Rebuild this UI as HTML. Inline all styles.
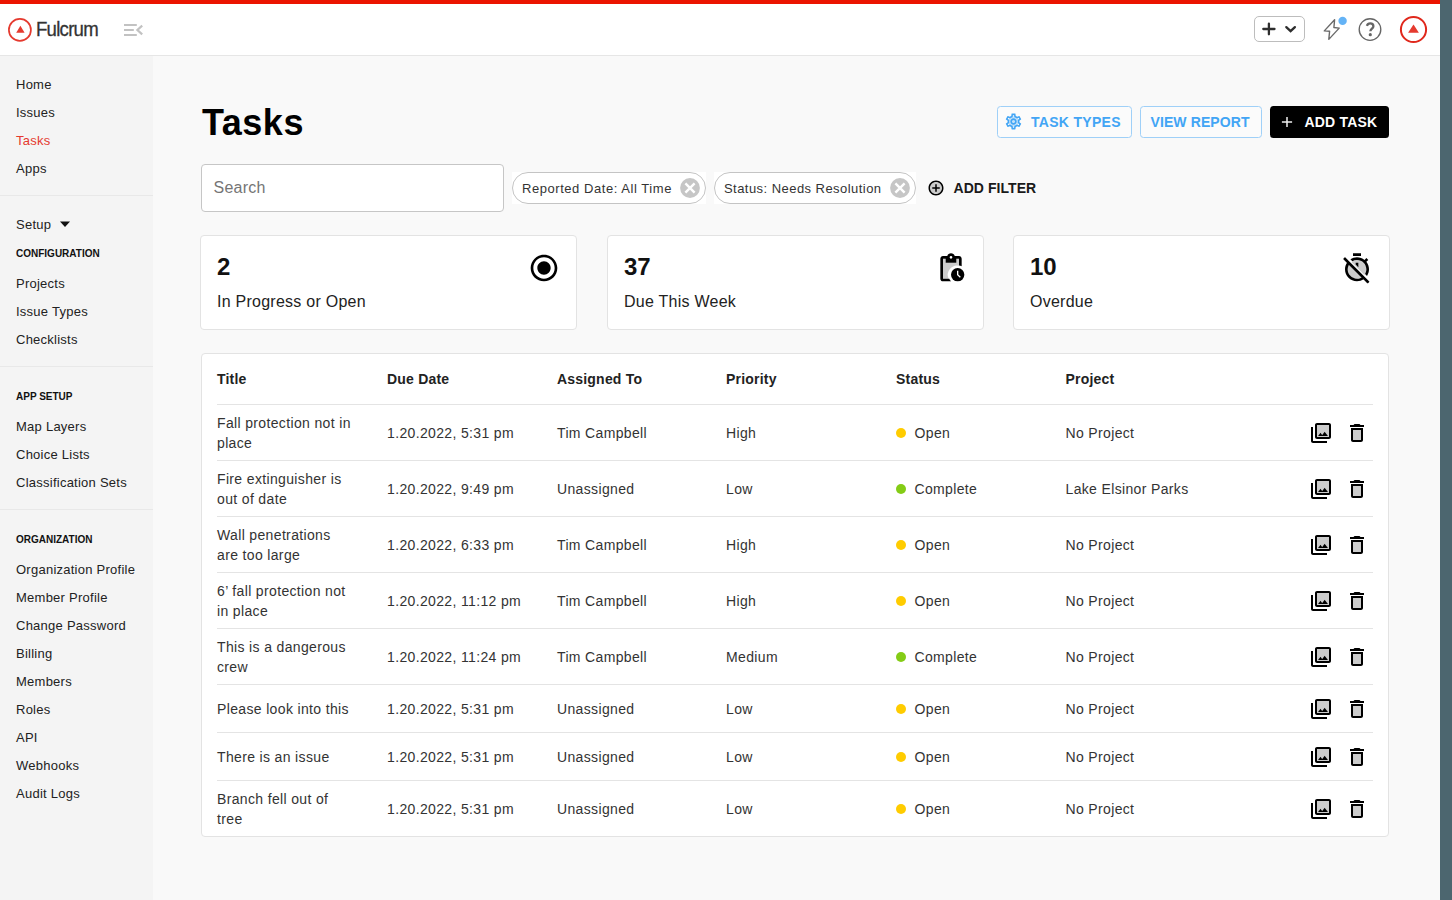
<!DOCTYPE html>
<html><head><meta charset="utf-8">
<style>
*{box-sizing:border-box;margin:0;padding:0}
html,body{width:1452px;height:900px;overflow:hidden;background:#f9f9f9;font-family:"Liberation Sans",sans-serif;color:#333}
.abs{position:absolute}
.t{position:absolute;white-space:nowrap}
#topbar{position:absolute;left:0;top:0;width:1440px;height:4px;background:#eb1400}
#rail{position:absolute;left:1440px;top:0;width:12px;height:900px;background:#4c666f}
#header{position:absolute;left:0;top:4px;width:1440px;height:52px;background:#fff;border-bottom:1px solid #e6e6e6}
#sidebar{position:absolute;left:0;top:56px;width:153px;height:844px;background:#f4f4f4}
.nav{position:absolute;left:16px;font-size:13px;color:#222;white-space:nowrap;letter-spacing:0.25px;line-height:16px}
.sec{position:absolute;left:16px;font-size:10px;font-weight:700;color:#111;white-space:nowrap;line-height:12px}
.sep{position:absolute;left:0;width:153px;height:1px;background:#e8e8e8}
.btn{position:absolute;top:106px;height:32px;border-radius:3.5px;font-size:14px;font-weight:700;letter-spacing:0.3px;line-height:30px;white-space:nowrap}
.obtn{border:1px solid #9fd0f8;color:#42a5f5;background:#fbfbfb}
.chip{position:absolute;top:172px;height:32px;border:1px solid #c4c4c4;border-radius:16px;background:#fff;font-size:13px;letter-spacing:0.45px;color:#333;line-height:30px;white-space:nowrap}
.card{position:absolute;top:235px;width:377px;height:95px;background:#fff;border:1px solid #e3e3e3;border-radius:4px}
.num{position:absolute;left:16px;top:17px;font-size:24px;font-weight:700;color:#111;line-height:28px}
.lbl{position:absolute;left:16px;top:56.3px;font-size:16px;color:#222;line-height:20px;letter-spacing:0.25px}
#table{position:absolute;left:201px;top:353px;width:1188px;height:484px;background:#fff;border:1px solid #e3e3e3;border-radius:4px}
.th{position:absolute;font-size:14px;font-weight:700;color:#222;line-height:20px;white-space:nowrap;letter-spacing:0.2px}
.td{position:absolute;font-size:14px;color:#333;line-height:20px;white-space:nowrap;letter-spacing:0.35px}
.hr{position:absolute;left:217px;width:1156px;height:1px;background:#e4e4e4}
.dot{position:absolute;width:10px;height:10px;border-radius:5px}
</style></head>
<body>
<div id="topbar"></div>
<div id="rail"></div>
<div id="header">
  <svg class="abs" style="left:7px;top:13px" width="26" height="26" viewBox="0 0 26 26">
    <circle cx="12.9" cy="12.9" r="11" fill="none" stroke="#e53a2f" stroke-width="1.7"/>
    <path d="M13.4 8.8 L17.6 15.8 L9.2 15.8 Z" fill="#e53a2f"/>
  </svg>
  <div class="abs" style="left:36px;top:14px;font-size:20px;color:#333;line-height:22px;letter-spacing:-0.8px;-webkit-text-stroke:0.3px #333;transform:scaleX(0.93);transform-origin:0 0">Fulcrum</div>
  <svg class="abs" style="left:120px;top:16px" width="26" height="26" viewBox="0 0 26 26">
    <g stroke="#c2c2c2" stroke-width="2" fill="none">
      <path d="M4 5h12.8M4 10h9.8M4 15h12.8"/>
      <path d="M22.2 5.6L17.4 10L22.2 14.4" stroke-width="2.2"/>
    </g>
  </svg>
</div>
<div class="abs" style="left:1254px;top:16px;width:51px;height:26px;border:1px solid #bdbdbd;border-radius:5px;background:#fff"></div>
<svg class="abs" style="left:1254px;top:16px" width="51" height="26" viewBox="0 0 51 26">
  <path d="M14.9 7.7v10.6M9.3 13h11.2" stroke="#2e2e2e" stroke-width="2.3" fill="none" stroke-linecap="round"/>
  <path d="M32.3 11.1l4.3 4.1l4.3-4.1" stroke="#2e2e2e" stroke-width="2.3" fill="none" stroke-linecap="round"/>
</svg>
<svg class="abs" style="left:1320px;top:14px" width="30" height="30" viewBox="0 0 30 30">
  <path d="M14.6 5.7 L4.3 16.9 L9.6 17.2 L8.8 25.4 L19.2 14.1 L13.9 13.5 Z" stroke="#6a6a6a" stroke-width="1.4" fill="none" stroke-linejoin="round"/>
  <circle cx="22.6" cy="6.9" r="4.2" fill="#64b3f6"/>
</svg>
<svg class="abs" style="left:1356px;top:16px" width="28" height="28" viewBox="0 0 28 28">
  <circle cx="14" cy="13.5" r="10.8" fill="none" stroke="#666" stroke-width="1.35"/>
  <path d="M10.9 9.9c0.6-1.8 1.8-2.5 3.3-2.5c1.9 0 3.2 1.1 3.2 2.8c0 2.3-3 2.6-3 5.1" stroke="#666" stroke-width="2.3" fill="none"/>
  <circle cx="14.3" cy="18.7" r="1.6" fill="#666"/>
</svg>
<svg class="abs" style="left:1398px;top:14px" width="31" height="31" viewBox="0 0 31 31">
  <circle cx="15.5" cy="15.5" r="12.6" fill="none" stroke="#e0281c" stroke-width="2"/>
  <path d="M15.5 10.4 L20.9 18.8 L10.1 18.8 Z" fill="#e53a2f"/>
</svg>
<div id="sidebar"></div>
<div class="nav" style="top:76.5px">Home</div>
<div class="nav" style="top:104.5px">Issues</div>
<div class="nav" style="top:132.5px;color:#e53a2f">Tasks</div>
<div class="nav" style="top:160.5px">Apps</div>
<div class="sep" style="top:195px"></div>
<div class="nav" style="top:216.5px">Setup</div>
<svg class="abs" style="left:59px;top:221px" width="12" height="7" viewBox="0 0 12 7"><path d="M1 0.5h10L6 6z" fill="#111"/></svg>
<div class="sec" style="top:247.5px">CONFIGURATION</div>
<div class="nav" style="top:275.5px">Projects</div>
<div class="nav" style="top:303.5px">Issue Types</div>
<div class="nav" style="top:331.5px">Checklists</div>
<div class="sep" style="top:366px"></div>
<div class="sec" style="top:390.5px">APP SETUP</div>
<div class="nav" style="top:418.5px">Map Layers</div>
<div class="nav" style="top:446.5px">Choice Lists</div>
<div class="nav" style="top:474.5px">Classification Sets</div>
<div class="sep" style="top:509px"></div>
<div class="sec" style="top:533.5px">ORGANIZATION</div>
<div class="nav" style="top:561.5px">Organization Profile</div>
<div class="nav" style="top:589.5px">Member Profile</div>
<div class="nav" style="top:617.5px">Change Password</div>
<div class="nav" style="top:645.5px">Billing</div>
<div class="nav" style="top:673.5px">Members</div>
<div class="nav" style="top:701.5px">Roles</div>
<div class="nav" style="top:729.5px">API</div>
<div class="nav" style="top:757.5px">Webhooks</div>
<div class="nav" style="top:785.5px">Audit Logs</div>
<div class="t" style="left:202px;top:102.5px;font-size:36px;font-weight:700;color:#000;line-height:40px;letter-spacing:0.5px">Tasks</div>
<div class="btn obtn" style="left:997px;width:135px"></div>
<svg class="abs" style="left:1004.4px;top:112.2px" width="19" height="19" viewBox="0 0 24 24" fill="#42a5f5"><circle cx="12" cy="12" r="6.6" opacity=".3"/><path d="M19.43 12.98c.04-.32.07-.64.07-.98 0-.34-.03-.66-.07-.98l2.11-1.65c.19-.15.24-.42.12-.64l-2-3.46c-.09-.16-.26-.25-.44-.25-.06 0-.12.01-.17.03l-2.49 1c-.52-.4-1.08-.73-1.69-.98l-.38-2.65C14.46 2.18 14.25 2 14 2h-4c-.25 0-.46.18-.49.42l-.38 2.650c-.61.25-1.17.59-1.69.98l-2.49-1c-.06-.02-.12-.03-.18-.03-.17 0-.34.09-.43.25l-2 3.46c-.13.22-.07.49.12.64l2.11 1.65c-.04.32-.07.65-.07.98s.03.66.07.98l-2.11 1.65c-.19.15-.24.42-.12.64l2 3.46c.09.16.26.25.44.25.06 0 .12-.01.17-.03l2.49-1c.52.4 1.08.73 1.69.98l.38 2.65c.03.24.24.42.49.42h4c.25 0 .46-.18.49-.42l.38-2.65c.61-.25 1.17-.59 1.690-.98l2.49 1c.06.02.12.03.18.03.17 0 .34-.09.43-.25l2-3.46c.12-.22.07-.49-.12-.64l-2.11-1.65zm-1.98-1.71c.04.31.05.52.05.73 0 .21-.02.43-.05.73l-.14 1.13.89.7 1.08.84-.7 1.21-1.27-.51-1.04-.42-.9.68c-.43.32-.84.56-1.25.73l-1.06.43-.16 1.13-.2 1.35h-1.4l-.19-1.35-.16-1.13-1.06-.43c-.43-.18-.83-.41-1.23-.71l-.91-.7-1.06.43-1.27.51-.7-1.21 1.08-.84.89-.7-.14-1.13c-.03-.31-.05-.54-.05-.74s.02-.43.05-.73l.14-1.13-.89-.7-1.08-.84.7-1.21 1.27.51 1.04.42.9-.68c.43-.32.84-.56 1.25-.73l1.06-.43.16-1.13.2-1.35h1.39l.19 1.35.16 1.13 1.06.43c.43.18.83.41 1.23.71l.91.7 1.06-.43 1.27-.51.7 1.21-1.070.85-.89.7.14 1.13zM12 8c-2.21 0-4 1.79-4 4s1.79 4 4 4 4-1.79 4-4-1.79-4-4-4zm0 6c-1.1 0-2-.9-2-2s.9-2 2-2 2 .9 2 2-.9 2-2 2z"/></svg>
<div class="t" style="left:1031px;top:112px;font-size:14px;font-weight:700;letter-spacing:0.3px;line-height:20px;color:#42a5f5">TASK TYPES</div>
<div class="btn obtn" style="left:1140px;width:122px"></div>
<div class="t" style="left:1150.5px;top:112px;font-size:14px;font-weight:700;letter-spacing:0.1px;line-height:20px;color:#42a5f5">VIEW REPORT</div>
<div class="btn" style="left:1270px;width:119px;background:#000"></div>
<svg class="abs" style="left:1280px;top:114px" width="14" height="16" viewBox="0 0 14 16"><path d="M7 2.9v10.2M1.9 8h10.2" stroke="#eee" stroke-width="1.5"/></svg>
<div class="t" style="left:1304.5px;top:112px;font-size:14px;font-weight:700;letter-spacing:0.2px;line-height:20px;color:#fff">ADD TASK</div>
<div class="abs" style="left:201px;top:164px;width:303px;height:48px;border:1px solid #c6c6c6;border-radius:4px;background:#fff"></div>
<div class="t" style="left:213.5px;top:178px;font-size:16px;color:#757575;line-height:20px;letter-spacing:0.25px">Search</div>
<div class="abs" style="left:512px;top:172px;width:194px;height:32px;background:#fff"></div>
<div class="chip" style="left:512px;width:194px"></div>
<div class="t" style="left:522px;top:179.5px;font-size:13px;letter-spacing:0.55px;color:#333;line-height:18px">Reported Date: All Time</div>
<svg class="abs" style="left:680px;top:178px" width="20" height="20" viewBox="0 0 20 20"><circle cx="10" cy="10" r="9.9" fill="#c6c6c6"/><path d="M5.4 5.4L14.6 14.6M14.6 5.4L5.4 14.6" stroke="#fff" stroke-width="2.4"/></svg>
<div class="abs" style="left:714px;top:172px;width:202px;height:32px;background:#fff"></div>
<div class="chip" style="left:714px;width:202px"></div>
<div class="t" style="left:724px;top:179.5px;font-size:13px;letter-spacing:0.45px;color:#333;line-height:18px">Status: Needs Resolution</div>
<svg class="abs" style="left:890px;top:178px" width="20" height="20" viewBox="0 0 20 20"><circle cx="10" cy="10" r="9.9" fill="#c6c6c6"/><path d="M5.4 5.4L14.6 14.6M14.6 5.4L5.4 14.6" stroke="#fff" stroke-width="2.4"/></svg>
<svg class="abs" style="left:927px;top:179px" width="18" height="18" viewBox="0 0 24 24"><circle cx="12" cy="12" r="9" fill="#ccc"/><path d="M13 7h-2v4H7v2h4v4h2v-4h4v-2h-4V7zm-1-5C6.48 2 2 6.48 2 12s4.48 10 10 10 10-4.48 10-10S17.52 2 12 2zm0 18c-4.41 0-8-3.59-8-8s3.59-8 8-8 8 3.59 8 8-3.59 8-8 8z" fill="#000"/></svg>
<div class="t" style="left:953.5px;top:178px;font-size:14px;font-weight:700;letter-spacing:0.05px;color:#1a1a1a;line-height:20px">ADD FILTER</div>
<div class="card" style="left:200px"><div class="num">2</div><div class="lbl">In Progress or Open</div><svg class="abs" style="left:327px;top:16px" width="32" height="32" viewBox="0 0 24 24" fill="#000"><path d="M12 7c-2.76 0-5 2.24-5 5s2.24 5 5 5 5-2.24 5-5-2.24-5-5-5zm0-5C6.48 2 2 6.48 2 12s4.48 10 10 10 10-4.48 10-10S17.52 2 12 2zm0 18c-4.42 0-8-3.58-8-8s3.58-8 8-8 8 3.58 8 8-3.58 8-8 8z"/></svg></div>
<div class="card" style="left:607px"><div class="num">37</div><div class="lbl">Due This Week</div><svg class="abs" style="left:327px;top:16px" width="32" height="32" viewBox="0 0 24 24" fill="#000"><path d="M6 5h2v3h8V5h2v5.3a7 7 0 0 0-7.8 9.7H6z" fill="#ccc"/><path d="M18 3h-3.18C14.4 1.84 13.3 1 12 1s-2.4.84-2.82 2H6c-1.1 0-2 .9-2 2v15c0 1.1.9 2 2 2h6.11c-.59-.57-1.07-1.25-1.42-2H6V5h2v3h8V5h2v5.08c.71.1 1.38.31 2 .6V5c0-1.1-.9-2-2-2zm-6 2c-.55 0-1-.45-1-1s.45-1 1-1 1 .45 1 1-.45 1-1 1z"/><circle cx="17" cy="17" r="5"/><path d="M16.5 14h1v2.79l1.85 1.85-.7.71-2.15-2.15z" fill="#fff"/></svg></div>
<div class="card" style="left:1013px"><div class="num">10</div><div class="lbl">Overdue</div><svg class="abs" style="left:327px;top:16px" width="32" height="32" viewBox="0 0 24 24" fill="#000"><circle cx="12" cy="13" r="7" fill="#ccc"/><path d="M15 1H9v2h6V1zm4.03 6.39l1.42-1.42c-.43-.51-.9-.99-1.41-1.41l-1.42 1.42C16.07 4.74 14.12 4 12 4c-1.83 0-3.53.55-4.95 1.48l1.46 1.46C9.53 6.35 10.73 6 12 6c3.87 0 7 3.13 7 7 0 1.27-.35 2.47-.94 3.49l1.45 1.45C20.45 16.53 21 14.83 21 13c0-2.12-.74-4.07-1.97-5.61zM11 9.44l2 2V8h-2v1.44zM3.02 4L1.75 5.27 4.5 8.03C3.55 9.45 3 11.16 3 13c0 4.97 4.02 9 9 9 1.84 0 3.55-.55 4.98-1.5l2.5 2.5 1.27-1.27-7.71-7.71L3.02 4zM12 20c-3.87 0-7-3.13-7-7 0-1.28.35-2.48.95-3.52l9.56 9.56c-1.03.61-2.23.96-3.51.96z"/><path d="M3.3 3.6L21.6 21.9" stroke="#fff" stroke-width="0.9"/><path d="M2.4 4.6L20.7 22.9" stroke="#000" stroke-width="1.8"/></svg></div>
<div id="table"></div>
<div class="th" style="left:217px;top:369px">Title</div>
<div class="th" style="left:387px;top:369px">Due Date</div>
<div class="th" style="left:557px;top:369px">Assigned To</div>
<div class="th" style="left:726px;top:369px">Priority</div>
<div class="th" style="left:896px;top:369px">Status</div>
<div class="th" style="left:1065.5px;top:369px">Project</div>
<div class="hr" style="top:404px"></div>
<div class="hr" style="top:460px"></div>
<div class="td" style="left:217px;top:413.0px">Fall protection not in</div>
<div class="td" style="left:217px;top:433.0px">place</div>
<div class="td" style="left:387px;top:423.0px">1.20.2022, 5:31 pm</div>
<div class="td" style="left:557px;top:423.0px">Tim Campbell</div>
<div class="td" style="left:726px;top:423.0px">High</div>
<div class="td" style="left:914.5px;top:423.0px">Open</div>
<div class="td" style="left:1065.5px;top:423.0px">No Project</div>
<div class="dot" style="left:896px;top:428.0px;background:#ffcc00"></div>
<svg class="abs" style="left:1309px;top:421.0px" width="24" height="24" viewBox="0 0 24 24" fill="#000"><path d="M8 16h12V4H8v12zm3.5-4.33l1.69 2.26 2.48-3.09L19 15H9l2.5-3.33z" fill="#ccc"/><path d="M8 2c-1.1 0-2 .9-2 2v12c0 1.1.9 2 2 2h12c1.1 0 2-.9 2-2V4c0-1.1-.9-2-2-2H8zm12 14H8V4h12v12zm-4.33-5.17l-2.48 3.09-1.69-2.25L9 15h10zM4 22h14v-2H4V6H2v14c0 1.1.9 2 2 2z"/></svg>
<svg class="abs" style="left:1345px;top:421.0px" width="24" height="24" viewBox="0 0 24 24" fill="#000"><path d="M8 9h8v10H8z" fill="#ccc"/><path d="M15.5 4l-1-1h-5l-1 1H5v2h14V4zM6 19c0 1.1.9 2 2 2h8c1.1 0 2-.9 2-2V7H6v12zM8 9h8v10H8V9z"/></svg>
<div class="hr" style="top:516px"></div>
<div class="td" style="left:217px;top:469.0px">Fire extinguisher is</div>
<div class="td" style="left:217px;top:489.0px">out of date</div>
<div class="td" style="left:387px;top:479.0px">1.20.2022, 9:49 pm</div>
<div class="td" style="left:557px;top:479.0px">Unassigned</div>
<div class="td" style="left:726px;top:479.0px">Low</div>
<div class="td" style="left:914.5px;top:479.0px">Complete</div>
<div class="td" style="left:1065.5px;top:479.0px">Lake Elsinor Parks</div>
<div class="dot" style="left:896px;top:484.0px;background:#84cc16"></div>
<svg class="abs" style="left:1309px;top:477.0px" width="24" height="24" viewBox="0 0 24 24" fill="#000"><path d="M8 16h12V4H8v12zm3.5-4.33l1.69 2.26 2.48-3.09L19 15H9l2.5-3.33z" fill="#ccc"/><path d="M8 2c-1.1 0-2 .9-2 2v12c0 1.1.9 2 2 2h12c1.1 0 2-.9 2-2V4c0-1.1-.9-2-2-2H8zm12 14H8V4h12v12zm-4.33-5.17l-2.48 3.09-1.69-2.25L9 15h10zM4 22h14v-2H4V6H2v14c0 1.1.9 2 2 2z"/></svg>
<svg class="abs" style="left:1345px;top:477.0px" width="24" height="24" viewBox="0 0 24 24" fill="#000"><path d="M8 9h8v10H8z" fill="#ccc"/><path d="M15.5 4l-1-1h-5l-1 1H5v2h14V4zM6 19c0 1.1.9 2 2 2h8c1.1 0 2-.9 2-2V7H6v12zM8 9h8v10H8V9z"/></svg>
<div class="hr" style="top:572px"></div>
<div class="td" style="left:217px;top:525.0px">Wall penetrations</div>
<div class="td" style="left:217px;top:545.0px">are too large</div>
<div class="td" style="left:387px;top:535.0px">1.20.2022, 6:33 pm</div>
<div class="td" style="left:557px;top:535.0px">Tim Campbell</div>
<div class="td" style="left:726px;top:535.0px">High</div>
<div class="td" style="left:914.5px;top:535.0px">Open</div>
<div class="td" style="left:1065.5px;top:535.0px">No Project</div>
<div class="dot" style="left:896px;top:540.0px;background:#ffcc00"></div>
<svg class="abs" style="left:1309px;top:533.0px" width="24" height="24" viewBox="0 0 24 24" fill="#000"><path d="M8 16h12V4H8v12zm3.5-4.33l1.69 2.26 2.48-3.09L19 15H9l2.5-3.33z" fill="#ccc"/><path d="M8 2c-1.1 0-2 .9-2 2v12c0 1.1.9 2 2 2h12c1.1 0 2-.9 2-2V4c0-1.1-.9-2-2-2H8zm12 14H8V4h12v12zm-4.33-5.17l-2.48 3.09-1.69-2.25L9 15h10zM4 22h14v-2H4V6H2v14c0 1.1.9 2 2 2z"/></svg>
<svg class="abs" style="left:1345px;top:533.0px" width="24" height="24" viewBox="0 0 24 24" fill="#000"><path d="M8 9h8v10H8z" fill="#ccc"/><path d="M15.5 4l-1-1h-5l-1 1H5v2h14V4zM6 19c0 1.1.9 2 2 2h8c1.1 0 2-.9 2-2V7H6v12zM8 9h8v10H8V9z"/></svg>
<div class="hr" style="top:628px"></div>
<div class="td" style="left:217px;top:581.0px">6’ fall protection not</div>
<div class="td" style="left:217px;top:601.0px">in place</div>
<div class="td" style="left:387px;top:591.0px">1.20.2022, 11:12 pm</div>
<div class="td" style="left:557px;top:591.0px">Tim Campbell</div>
<div class="td" style="left:726px;top:591.0px">High</div>
<div class="td" style="left:914.5px;top:591.0px">Open</div>
<div class="td" style="left:1065.5px;top:591.0px">No Project</div>
<div class="dot" style="left:896px;top:596.0px;background:#ffcc00"></div>
<svg class="abs" style="left:1309px;top:589.0px" width="24" height="24" viewBox="0 0 24 24" fill="#000"><path d="M8 16h12V4H8v12zm3.5-4.33l1.69 2.26 2.48-3.09L19 15H9l2.5-3.33z" fill="#ccc"/><path d="M8 2c-1.1 0-2 .9-2 2v12c0 1.1.9 2 2 2h12c1.1 0 2-.9 2-2V4c0-1.1-.9-2-2-2H8zm12 14H8V4h12v12zm-4.33-5.17l-2.48 3.09-1.69-2.25L9 15h10zM4 22h14v-2H4V6H2v14c0 1.1.9 2 2 2z"/></svg>
<svg class="abs" style="left:1345px;top:589.0px" width="24" height="24" viewBox="0 0 24 24" fill="#000"><path d="M8 9h8v10H8z" fill="#ccc"/><path d="M15.5 4l-1-1h-5l-1 1H5v2h14V4zM6 19c0 1.1.9 2 2 2h8c1.1 0 2-.9 2-2V7H6v12zM8 9h8v10H8V9z"/></svg>
<div class="hr" style="top:684px"></div>
<div class="td" style="left:217px;top:637.0px">This is a dangerous</div>
<div class="td" style="left:217px;top:657.0px">crew</div>
<div class="td" style="left:387px;top:647.0px">1.20.2022, 11:24 pm</div>
<div class="td" style="left:557px;top:647.0px">Tim Campbell</div>
<div class="td" style="left:726px;top:647.0px">Medium</div>
<div class="td" style="left:914.5px;top:647.0px">Complete</div>
<div class="td" style="left:1065.5px;top:647.0px">No Project</div>
<div class="dot" style="left:896px;top:652.0px;background:#84cc16"></div>
<svg class="abs" style="left:1309px;top:645.0px" width="24" height="24" viewBox="0 0 24 24" fill="#000"><path d="M8 16h12V4H8v12zm3.5-4.33l1.69 2.26 2.48-3.09L19 15H9l2.5-3.33z" fill="#ccc"/><path d="M8 2c-1.1 0-2 .9-2 2v12c0 1.1.9 2 2 2h12c1.1 0 2-.9 2-2V4c0-1.1-.9-2-2-2H8zm12 14H8V4h12v12zm-4.33-5.17l-2.48 3.09-1.69-2.25L9 15h10zM4 22h14v-2H4V6H2v14c0 1.1.9 2 2 2z"/></svg>
<svg class="abs" style="left:1345px;top:645.0px" width="24" height="24" viewBox="0 0 24 24" fill="#000"><path d="M8 9h8v10H8z" fill="#ccc"/><path d="M15.5 4l-1-1h-5l-1 1H5v2h14V4zM6 19c0 1.1.9 2 2 2h8c1.1 0 2-.9 2-2V7H6v12zM8 9h8v10H8V9z"/></svg>
<div class="hr" style="top:732px"></div>
<div class="td" style="left:217px;top:699.0px">Please look into this</div>
<div class="td" style="left:387px;top:699.0px">1.20.2022, 5:31 pm</div>
<div class="td" style="left:557px;top:699.0px">Unassigned</div>
<div class="td" style="left:726px;top:699.0px">Low</div>
<div class="td" style="left:914.5px;top:699.0px">Open</div>
<div class="td" style="left:1065.5px;top:699.0px">No Project</div>
<div class="dot" style="left:896px;top:704.0px;background:#ffcc00"></div>
<svg class="abs" style="left:1309px;top:697.0px" width="24" height="24" viewBox="0 0 24 24" fill="#000"><path d="M8 16h12V4H8v12zm3.5-4.33l1.69 2.26 2.48-3.09L19 15H9l2.5-3.33z" fill="#ccc"/><path d="M8 2c-1.1 0-2 .9-2 2v12c0 1.1.9 2 2 2h12c1.1 0 2-.9 2-2V4c0-1.1-.9-2-2-2H8zm12 14H8V4h12v12zm-4.33-5.17l-2.48 3.09-1.69-2.25L9 15h10zM4 22h14v-2H4V6H2v14c0 1.1.9 2 2 2z"/></svg>
<svg class="abs" style="left:1345px;top:697.0px" width="24" height="24" viewBox="0 0 24 24" fill="#000"><path d="M8 9h8v10H8z" fill="#ccc"/><path d="M15.5 4l-1-1h-5l-1 1H5v2h14V4zM6 19c0 1.1.9 2 2 2h8c1.1 0 2-.9 2-2V7H6v12zM8 9h8v10H8V9z"/></svg>
<div class="hr" style="top:780px"></div>
<div class="td" style="left:217px;top:747.0px">There is an issue</div>
<div class="td" style="left:387px;top:747.0px">1.20.2022, 5:31 pm</div>
<div class="td" style="left:557px;top:747.0px">Unassigned</div>
<div class="td" style="left:726px;top:747.0px">Low</div>
<div class="td" style="left:914.5px;top:747.0px">Open</div>
<div class="td" style="left:1065.5px;top:747.0px">No Project</div>
<div class="dot" style="left:896px;top:752.0px;background:#ffcc00"></div>
<svg class="abs" style="left:1309px;top:745.0px" width="24" height="24" viewBox="0 0 24 24" fill="#000"><path d="M8 16h12V4H8v12zm3.5-4.33l1.69 2.26 2.48-3.09L19 15H9l2.5-3.33z" fill="#ccc"/><path d="M8 2c-1.1 0-2 .9-2 2v12c0 1.1.9 2 2 2h12c1.1 0 2-.9 2-2V4c0-1.1-.9-2-2-2H8zm12 14H8V4h12v12zm-4.33-5.17l-2.48 3.09-1.69-2.25L9 15h10zM4 22h14v-2H4V6H2v14c0 1.1.9 2 2 2z"/></svg>
<svg class="abs" style="left:1345px;top:745.0px" width="24" height="24" viewBox="0 0 24 24" fill="#000"><path d="M8 9h8v10H8z" fill="#ccc"/><path d="M15.5 4l-1-1h-5l-1 1H5v2h14V4zM6 19c0 1.1.9 2 2 2h8c1.1 0 2-.9 2-2V7H6v12zM8 9h8v10H8V9z"/></svg>
<div class="td" style="left:217px;top:789.0px">Branch fell out of</div>
<div class="td" style="left:217px;top:809.0px">tree</div>
<div class="td" style="left:387px;top:799.0px">1.20.2022, 5:31 pm</div>
<div class="td" style="left:557px;top:799.0px">Unassigned</div>
<div class="td" style="left:726px;top:799.0px">Low</div>
<div class="td" style="left:914.5px;top:799.0px">Open</div>
<div class="td" style="left:1065.5px;top:799.0px">No Project</div>
<div class="dot" style="left:896px;top:804.0px;background:#ffcc00"></div>
<svg class="abs" style="left:1309px;top:797.0px" width="24" height="24" viewBox="0 0 24 24" fill="#000"><path d="M8 16h12V4H8v12zm3.5-4.33l1.69 2.26 2.48-3.09L19 15H9l2.5-3.33z" fill="#ccc"/><path d="M8 2c-1.1 0-2 .9-2 2v12c0 1.1.9 2 2 2h12c1.1 0 2-.9 2-2V4c0-1.1-.9-2-2-2H8zm12 14H8V4h12v12zm-4.33-5.17l-2.48 3.09-1.69-2.25L9 15h10zM4 22h14v-2H4V6H2v14c0 1.1.9 2 2 2z"/></svg>
<svg class="abs" style="left:1345px;top:797.0px" width="24" height="24" viewBox="0 0 24 24" fill="#000"><path d="M8 9h8v10H8z" fill="#ccc"/><path d="M15.5 4l-1-1h-5l-1 1H5v2h14V4zM6 19c0 1.1.9 2 2 2h8c1.1 0 2-.9 2-2V7H6v12zM8 9h8v10H8V9z"/></svg>
</body></html>
